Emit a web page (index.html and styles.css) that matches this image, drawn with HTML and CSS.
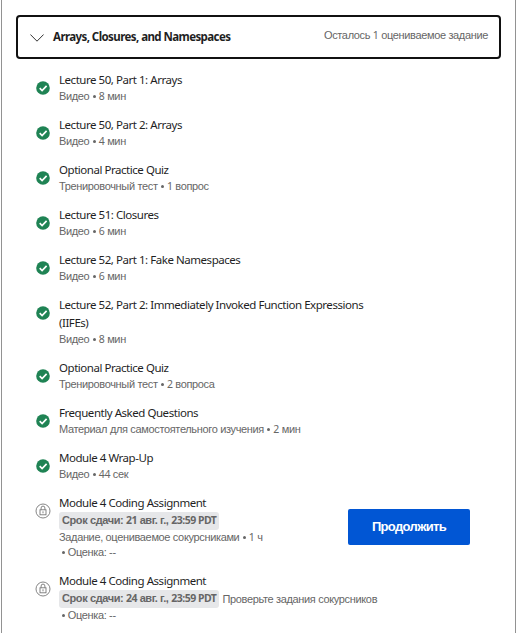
FILE: index.html
```
<!DOCTYPE html>
<html lang="ru">
<head>
<meta charset="utf-8">
<title>Arrays, Closures, and Namespaces</title>
<link rel="stylesheet" href="styles.css">
</head>
<body>
<svg class="defs" width="0" height="0">
  <symbol id="done" viewBox="0 0 14 14"><circle cx="7" cy="7" r="6.8" fill="#1f8354"/><path d="M3.7 7.2 6.1 9.5 10.6 4.9" fill="none" stroke="#fff" stroke-width="1.7"/></symbol>
  <symbol id="lock" viewBox="0 0 16 16"><g fill="none" stroke="#777" stroke-width=".9"><circle cx="8" cy="8" r="7"/><rect x="5" y="6.8" width="6" height="5"/><path d="M6.1 6.8V5a1.9 1.9 0 0 1 3.8 0v1.8M8 8.3v2"/></g></symbol>
</svg>
<main class="module">
  <header class="head">
    <svg class="chevron" viewBox="0 0 14 8"><path d="M.4.5 7 7.2 13.6.5" fill="none" stroke="#333" stroke-width="1"/></svg>
    <h1 class="heading">Arrays, Closures, and Namespaces</h1>
    <p class="remaining">Осталось <span class="n">1</span> оцениваемое задание</p>
  </header>
  <ul class="items">
    <li class="item"><svg class="icon"><use href="#done"/></svg><div class="body"><p class="title">Lecture 50, Part 1: Arrays</p><p class="meta">Видео <b class="dot"></b> <span class="n">8</span> мин</p></div></li>
    <li class="item"><svg class="icon"><use href="#done"/></svg><div class="body"><p class="title">Lecture 50, Part 2: Arrays</p><p class="meta">Видео <b class="dot"></b> <span class="n">4</span> мин</p></div></li>
    <li class="item"><svg class="icon"><use href="#done"/></svg><div class="body"><p class="title">Optional Practice Quiz</p><p class="meta">Тренировочный тест <b class="dot"></b> <span class="n">1</span> вопрос</p></div></li>
    <li class="item"><svg class="icon"><use href="#done"/></svg><div class="body"><p class="title">Lecture 51: Closures</p><p class="meta">Видео <b class="dot"></b> <span class="n">6</span> мин</p></div></li>
    <li class="item"><svg class="icon"><use href="#done"/></svg><div class="body"><p class="title">Lecture 52, Part 1: Fake Namespaces</p><p class="meta">Видео <b class="dot"></b> <span class="n">6</span> мин</p></div></li>
    <li class="item"><svg class="icon"><use href="#done"/></svg><div class="body"><p class="title">Lecture 52, Part 2: Immediately Invoked Function Expressions<br>(IIFEs)</p><p class="meta">Видео <b class="dot"></b> <span class="n">8</span> мин</p></div></li>
    <li class="item"><svg class="icon"><use href="#done"/></svg><div class="body"><p class="title">Optional Practice Quiz</p><p class="meta">Тренировочный тест <b class="dot"></b> <span class="n">2</span> вопроса</p></div></li>
    <li class="item"><svg class="icon"><use href="#done"/></svg><div class="body"><p class="title">Frequently Asked Questions</p><p class="meta">Материал для самостоятельного изучения <b class="dot"></b> <span class="n">2</span> мин</p></div></li>
    <li class="item"><svg class="icon"><use href="#done"/></svg><div class="body"><p class="title">Module 4 Wrap-Up</p><p class="meta">Видео <b class="dot"></b> <span class="n">44</span> сек</p></div></li>
    <li class="item"><svg class="icon lock"><use href="#lock"/></svg><div class="body"><p class="title">Module 4 Coding Assignment</p><p class="due"><strong class="badge">Срок сдачи: <span class="n">21</span> авг. г., <span class="n">23:59 PDT</span></strong></p><p class="meta">Задание, оцениваемое сокурсниками <b class="dot"></b> <span class="n">1</span> ч</p><p class="meta grade"><b class="dot"></b> Оценка: --</p></div><button class="go">Продолжить</button></li>
    <li class="item"><svg class="icon lock"><use href="#lock"/></svg><div class="body"><p class="title">Module 4 Coding Assignment</p><p class="due"><strong class="badge">Срок сдачи: <span class="n">24</span> авг. г., <span class="n">23:59 PDT</span></strong><span class="review">Проверьте задания сокурсников</span></p><p class="meta grade"><b class="dot"></b> Оценка: --</p></div></li>
  </ul>
</main>
</body>
</html>
```
FILE: styles.css
```
* { box-sizing: border-box; margin: 0; padding: 0; }
body { height: 633px; overflow: hidden; background: #fff; font-family: "Liberation Sans", sans-serif; }
.defs { display: block; }
.module { width: 515px; height: 633px; margin-left: 1px; padding: 15px 14px 0; border: solid #929292; border-width: 0 1px; overflow: hidden; }
.head { display: flex; align-items: center; width: 485px; height: 44px; padding: 0 11px 0 12px; border: 2px solid #111; border-radius: 4px; }
.chevron { width: 14px; height: 8px; margin: 1px 9px 0 0; }
.heading { font: bold 11.5px/18px "Noto Sans", sans-serif; letter-spacing: -.58px; color: #1f1f1f; white-space: nowrap; }
.remaining { margin: -4px 0 0 auto; font-size: 11px; line-height: 16px; letter-spacing: -.35px; color: #666; white-space: nowrap; }
.items { display: flex; flex-direction: column; gap: 12px; padding: 12px 0 0 18px; list-style: none; }
.item { display: flex; align-items: flex-start; white-space: nowrap; }
.icon { flex: none; width: 14px; height: 14px; margin: 9.5px 9.5px 0 1.5px; }
.icon.lock { width: 16px; height: 16px; margin: 8.5px 8.5px 0 .5px; }
.body { width: 289px; }
.title { font: 11.5px/18px "Noto Sans", sans-serif; letter-spacing: -.46px; color: #1f1f1f; }
.meta, .review { font-size: 11px; line-height: 15px; letter-spacing: -.35px; color: #666; }
.meta { height: 15px; }
.n { font-family: "Noto Sans", sans-serif; font-size: 10.5px; letter-spacing: -.4px; line-height: 1; }
.dot { display: inline-block; width: 3px; height: 3px; margin: 0 .5px; border-radius: 50%; background: #666; vertical-align: 2px; }
.due { display: flex; align-items: center; height: 18px; }
.badge { display: block; flex: none; width: 160px; height: 18px; padding-left: 3px; border-radius: 3px; background: #e6e7e9; color: #666; font-size: 11px; line-height: 17px; letter-spacing: -.4px; }
.badge .n { font-size: 10.5px; letter-spacing: -.5px; }
.review { margin-left: 3.5px; }
.grade { padding-left: 2px; }
.go { width: 122px; height: 36px; margin: 15px 0 0; border: 0; border-radius: 2px; background: #0156d4; color: #fff; font: bold 13px/36px "Liberation Sans", sans-serif; letter-spacing: -.65px; }
```
